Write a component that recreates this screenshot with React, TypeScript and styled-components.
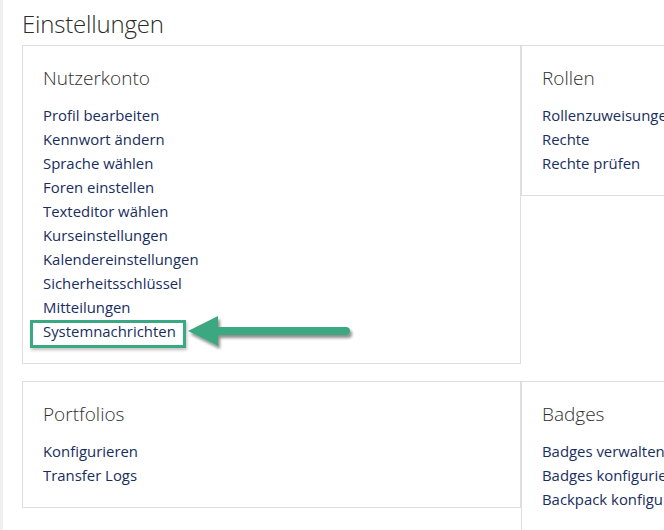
import React from "react";
import styled, { createGlobalStyle } from "styled-components";

const Global = createGlobalStyle`
  html, body { margin: 0; padding: 0; background: #fff; overflow: hidden; }
  body { font-family: "Open Sans", "Noto Sans", sans-serif; }
`;

const Page = styled.div`
  width: 664px;
  height: 530px;
  box-sizing: border-box;
  border-left: 3px solid #efefef;
  padding: 8px 0 0 19px;
  overflow: hidden;
`;

const Title = styled.h1`
  margin: 0 0 6px 0;
  font-family: "Open Sans", sans-serif;
  font-weight: 300;
  font-size: 24px;
  line-height: 31px;
  color: #2b2b2b;
  letter-spacing: -0.2px;
`;

const Grid = styled.div`
  display: grid;
  grid-template-columns: 499px 499px;
  row-gap: 17px;
  align-items: start;
  width: 998px;
`;

const Card = styled.section<{ $right?: boolean }>`
  box-sizing: border-box;
  border: 1px solid #dedede;
  padding: 20px ${(p) => (p.$right ? "20px" : "20px")};
`;

const CardTitle = styled.h2`
  margin: 0 0 13px 0;
  font-family: "Open Sans", sans-serif;
  font-weight: 300;
  font-size: 19px;
  line-height: 24px;
  color: #2f2f2f;
`;

const List = styled.ul`
  list-style: none;
  margin: 0;
  padding: 0;
`;

const Item = styled.li`
  position: relative;
  height: 24px;
  line-height: 24px;
  font-size: 14.9px;
  white-space: nowrap;
  color: #182e5e;
`;

const Highlight = styled.span`
  position: absolute;
  left: -13px;
  top: 1px;
  width: 156px;
  height: 28px;
  box-sizing: border-box;
  border: 3px solid #3aa882;
  box-shadow: 1px 2px 3px rgba(0, 0, 0, 0.25);
  pointer-events: none;
`;

const Arrow = styled.svg`
  position: absolute;
  left: 144px;
  top: -6px;
  overflow: visible;
`;

function ArrowIcon() {
  return (
    <Arrow width="170" height="40" viewBox="0 0 170 40">
      <defs>
        <filter id="sh" x="-20%" y="-50%" width="140%" height="200%">
          <feGaussianBlur in="SourceAlpha" stdDeviation="1.6" />
          <feOffset dx="2" dy="3" result="b" />
          <feComponentTransfer>
            <feFuncA type="linear" slope="0.45" />
          </feComponentTransfer>
          <feMerge>
            <feMergeNode />
            <feMergeNode in="SourceGraphic" />
          </feMerge>
        </filter>
      </defs>
      <g filter="url(#sh)" fill="#3aa882">
        <polygon points="1,18 31,3 31,33" />
        <rect x="28" y="14" width="135" height="8" rx="4" />
      </g>
    </Arrow>
  );
}

type Section = { title: string; items: string[]; right?: boolean };

const rows: Section[][] = [
  [
    {
      title: "Nutzerkonto",
      items: [
        "Profil bearbeiten",
        "Kennwort ändern",
        "Sprache wählen",
        "Foren einstellen",
        "Texteditor wählen",
        "Kurseinstellungen",
        "Kalendereinstellungen",
        "Sicherheitsschlüssel",
        "Mitteilungen",
        "Systemnachrichten",
      ],
    },
    {
      title: "Rollen",
      items: ["Rollenzuweisungen", "Rechte", "Rechte prüfen"],
      right: true,
    },
  ],
  [
    { title: "Portfolios", items: ["Konfigurieren", "Transfer Logs"] },
    {
      title: "Badges",
      items: ["Badges verwalten", "Badges konfigurieren", "Backpack konfigurieren"],
      right: true,
    },
  ],
];

export default function App() {
  return (
    <>
      <Global />
      <Page>
        <Title>Einstellungen</Title>
        <Grid>
          {rows.flat().map((s) => (
            <Card key={s.title} $right={s.right}>
              <CardTitle>{s.title}</CardTitle>
              <List>
                {s.items.map((it) => (
                  <Item key={it}>
                    {it}
                    {it === "Systemnachrichten" && (
                      <>
                        <Highlight />
                        <ArrowIcon />
                      </>
                    )}
                  </Item>
                ))}
              </List>
            </Card>
          ))}
        </Grid>
      </Page>
    </>
  );
}
